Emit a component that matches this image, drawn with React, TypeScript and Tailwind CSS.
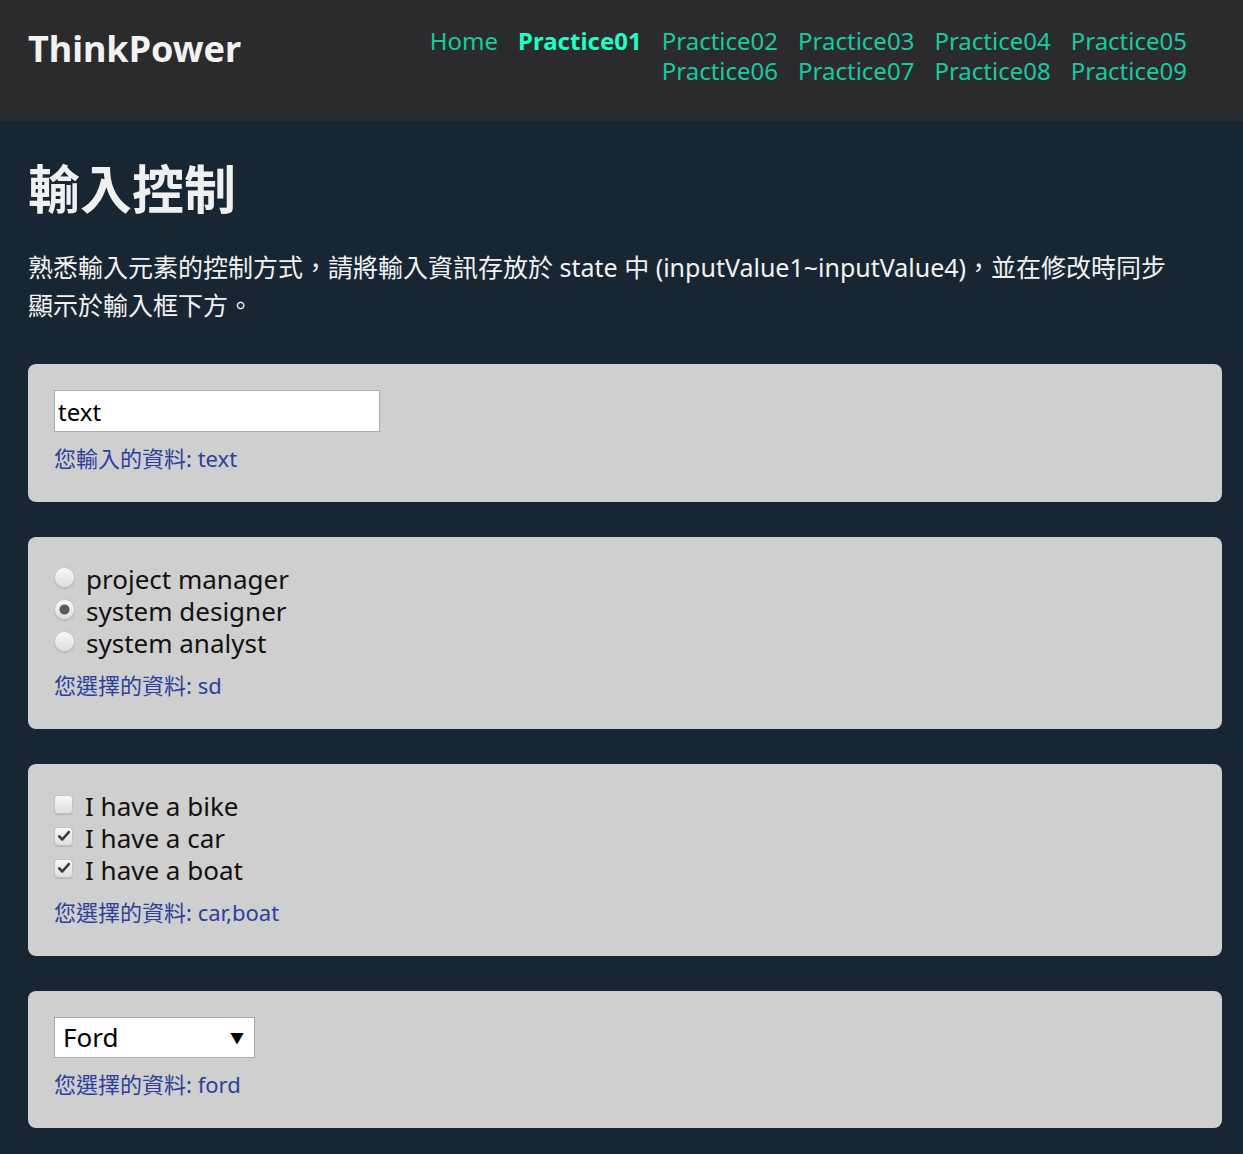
import { useState } from "react";

const FONT = { fontFamily: '"Noto Sans", "Noto Sans CJK TC", sans-serif' };

const LINKS = [
  "Home",
  "Practice01",
  "Practice02",
  "Practice03",
  "Practice04",
  "Practice05",
  "Practice06",
  "Practice07",
  "Practice08",
  "Practice09",
];

const JOBS = [
  { value: "pm", label: "project manager" },
  { value: "sd", label: "system designer" },
  { value: "sa", label: "system analyst" },
];

const VEHICLES = [
  { value: "bike", label: "I have a bike" },
  { value: "car", label: "I have a car" },
  { value: "boat", label: "I have a boat" },
];

function Card({ children }: { children: React.ReactNode }) {
  return <section className="rounded-lg bg-[#cfcfcf] px-[26px] pt-[26px] pb-[29px]">{children}</section>;
}

function Echo({ label, value }: { label: string; value: string }) {
  return (
    <p className="mt-[11px] text-[22px] leading-[30px] text-[#2d3f9c]">
      {label}: {value}
    </p>
  );
}

export default function App() {
  const [inputValue1, setInputValue1] = useState("text");
  const [inputValue2, setInputValue2] = useState("sd");
  const [inputValue3, setInputValue3] = useState<string[]>(["car", "boat"]);
  const [inputValue4, setInputValue4] = useState("ford");

  const toggle = (v: string) =>
    setInputValue3((prev) => (prev.includes(v) ? prev.filter((x) => x !== v) : [...prev, v]));

  return (
    <div className="min-h-[1154px] bg-[#182633]" style={FONT}>
      <header className="flex h-[121px] items-start justify-between bg-[#2b2b2d] pl-[28px] pr-[56px]">
        <div className="pt-[24px] text-[36px] font-bold leading-[50px] text-[#f2f2f2]">ThinkPower</div>
        <nav className="flex w-[790px] flex-wrap justify-end gap-x-[20px] pt-[26px]">
          {LINKS.map((l) => (
            <a
              key={l}
              href="#"
              className={
                l === "Practice01"
                  ? "text-[24px] font-bold leading-[30px] text-[#1effc6]"
                  : "text-[24px] leading-[30px] text-[#19c99f]"
              }
            >
              {l}
            </a>
          ))}
        </nav>
      </header>

      <main className="pl-[28px] pr-[21px] pt-[34px] pb-[27px]">
        <h1 className="text-[52px] font-bold leading-[68px] text-[#f0f0f0]">輸入控制</h1>
        <p className="mt-[25px] max-w-[1155px] text-[25px] leading-[38px] text-[#f2f2f2]">
          熟悉輸入元素的控制方式，請將輸入資訊存放於 state 中 (inputValue1~inputValue4)，並在修改時同步顯示於輸入框下方。
        </p>

        <div className="mt-[40px] flex flex-col gap-[35px]">
          <Card>
            <input
              type="text"
              value={inputValue1}
              onChange={(e) => setInputValue1(e.target.value)}
              className="block h-[42px] w-[326px] border border-[#aaaaaa] bg-white px-[3px] text-[24px] text-black outline-none"
            />
            <Echo label="您輸入的資料" value={inputValue1} />
          </Card>

          <Card>
            <div>
              {JOBS.map((j) => (
                <label key={j.value} className="flex h-[32px] cursor-pointer items-center text-[26px] leading-[32px] text-[#111]">
                  <input
                    type="radio"
                    name="job"
                    value={j.value}
                    checked={inputValue2 === j.value}
                    onChange={() => setInputValue2(j.value)}
                    className="mr-[11px] h-[21px] w-[21px] -translate-y-[2px] appearance-none rounded-full border border-[#c4c4c4] bg-[linear-gradient(#f8f8f8,#dedede)] shadow-[0_1px_1px_rgba(0,0,0,0.15)] checked:bg-[radial-gradient(circle,#5a5a5a_0_4.5px,transparent_5.5px),linear-gradient(#f8f8f8,#dedede)]"
                  />
                  <span>{j.label}</span>
                </label>
              ))}
            </div>
            <Echo label="您選擇的資料" value={inputValue2} />
          </Card>

          <Card>
            <div>
              {VEHICLES.map((v) => {
                const on = inputValue3.includes(v.value);
                return (
                  <label
                    key={v.value}
                    className="flex h-[32px] cursor-pointer items-center text-[26px] leading-[32px] text-[#111]"
                    onClick={() => toggle(v.value)}
                  >
                    <span className="mr-[12px] flex h-[19px] w-[19px] -translate-y-[2px] items-center justify-center rounded-[4px] border border-[#c4c4c4] bg-[linear-gradient(#f8f8f8,#dedede)] shadow-[0_1px_1px_rgba(0,0,0,0.15)]">
                      {on && (
                        <svg viewBox="0 0 16 16" className="h-[14px] w-[14px]">
                          <path d="M2.5 8.5 L6 12 L13.5 3.5" fill="none" stroke="#3a3a3a" strokeWidth="3" strokeLinecap="round" strokeLinejoin="round" />
                        </svg>
                      )}
                    </span>
                    <span>{v.label}</span>
                  </label>
                );
              })}
            </div>
            <Echo label="您選擇的資料" value={inputValue3.join(",")} />
          </Card>

          <Card>
            <div className="relative w-[201px]">
              <select
                value={inputValue4}
                onChange={(e) => setInputValue4(e.target.value)}
                className="block h-[41px] w-[201px] appearance-none rounded-none border border-[#aaaaaa] bg-white pl-[8px] text-[26px] text-black outline-none"
              >
                <option value="volvo">Volvo</option>
                <option value="saab">Saab</option>
                <option value="ford">Ford</option>
                <option value="audi">Audi</option>
              </select>
              <span className="pointer-events-none absolute right-[11px] top-[10px] text-[14px] text-black">▼</span>
            </div>
            <Echo label="您選擇的資料" value={inputValue4} />
          </Card>
        </div>
      </main>
    </div>
  );
}
